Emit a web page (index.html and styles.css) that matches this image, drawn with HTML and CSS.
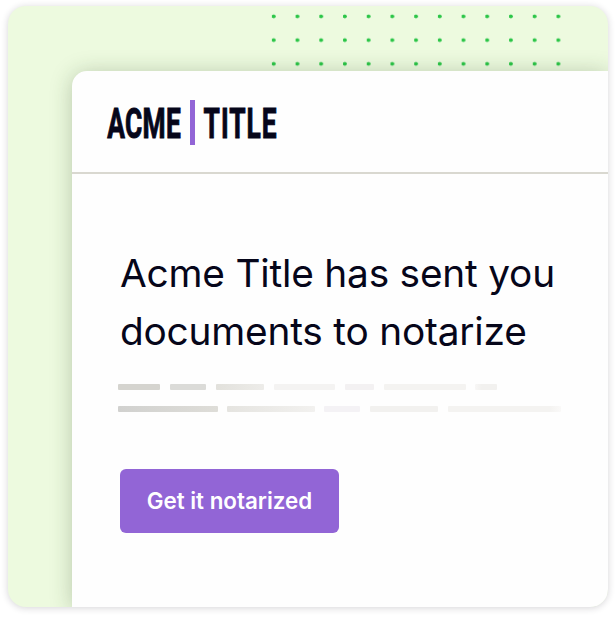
FILE: index.html
```html
<!DOCTYPE html>
<html lang="en">
<head>
<meta charset="utf-8">
<title>Acme Title</title>
<link rel="stylesheet" href="styles.css">
</head>
<body>
<main class="frame">
  <div class="dots"></div>
  <section class="card">
    <header class="header">
      <div class="logo">
        <svg width="74" height="45" viewBox="0 0 74 45"><text class="logo-text" transform="translate(.2 37.7) scale(.61 1)">ACME</text></svg>
        <span class="logo-bar"></span>
        <svg width="75" height="45" viewBox="0 0 75 45"><text class="logo-text wide" transform="translate(.6 38.1) scale(.61 1)">TITLE</text></svg>
      </div>
    </header>
    <div class="content">
      <h1 class="heading">Acme Title has sent you<br>documents to notarize</h1>
      <div class="lines">
        <div class="row"><i class="a1"></i><i class="a2"></i><i class="a3"></i><i class="a4"></i><i class="a5"></i><i class="a6"></i><i class="a7"></i></div>
        <div class="row"><i class="b1"></i><i class="b2"></i><i class="b3"></i><i class="b4"></i><i class="b5"></i></div>
      </div>
      <button class="button">Get it notarized</button>
    </div>
  </section>
</main>
</body>
</html>
```
FILE: styles.css
```css
* { box-sizing: border-box; }
body { margin: 0; background: #fff; height: 617px; overflow: hidden; padding: 6px 8px 10px; font-family: Inter, sans-serif; color: #06061a; }
.frame { width: 600px; height: 601px; border-radius: 18px; background: #edfadf; overflow: hidden; padding-left: 64px; box-shadow: 0 1px 7px rgba(30, 25, 40, .19); }
.dots { height: 65px; margin-left: 190px; width: 310px; background: radial-gradient(circle at 11.7px 10.4px, #2bc547 1.6px, rgba(43, 197, 71, 0) 2.2px) 0 0 / 23.72px 23.72px; }
.card { height: 536px; background: #fefefe; border-top-left-radius: 15px; box-shadow: 0 2px 22px rgba(40, 65, 35, .27); }
.header { height: 103px; padding: 29px 0 0 35px; border-bottom: 2px solid #d9d8d0; }
.logo { display: flex; }
.logo svg { overflow: visible; }
.logo-text { font: 700 43.2px Roboto, sans-serif; fill: #06061a; stroke: #06061a; stroke-width: 1px; letter-spacing: .5px; }
.logo-text.wide { letter-spacing: 1.6px; }
.logo-bar { width: 5px; height: 45px; margin: 0 8px 0 9px; background: #9265d6; }
.content { padding: 70px 0 0 48px; }
.heading { margin: 0; font-size: 38.8px; line-height: 58px; letter-spacing: -.2px; font-weight: 400; white-space: nowrap; }
.lines { margin: 24px 0 0 -2px; }
.row { display: flex; height: 6px; margin-bottom: 16px; }
.row i { height: 6px; border-radius: 1px; }
.a1 { width: 42px; margin-right: 10px; background: #d5d4cf; }
.a2 { width: 36px; margin-right: 10px; background: #dbdbd8; }
.a3 { width: 48px; margin-right: 10px; background: linear-gradient(90deg, #e2e1dc, #edece9); }
.a4 { width: 61px; margin-right: 10px; background: #f4f3f2; }
.a5 { width: 29px; margin-right: 10px; background: #f3f1f2; }
.a6 { width: 82px; margin-right: 9px; background: #f4f3f1; }
.a7 { width: 22px; background: linear-gradient(90deg, #f8f7f6, #f2f1ef 30%); }
.b1 { width: 100px; margin-right: 9px; background: linear-gradient(90deg, #d1d1cf, #deddd8); }
.b2 { width: 88px; margin-right: 9px; background: linear-gradient(90deg, #e5e4e0, #f2f1ef); }
.b3 { width: 36px; margin-right: 10px; background: #f4f2f5; }
.b4 { width: 68px; margin-right: 10px; background: #f2f1ef; }
.b5 { width: 113px; background: linear-gradient(90deg, #f4f3f1 90%, #faf9f8); }
.button { display: block; width: 219px; height: 64px; margin-top: 57px; padding: 0 0 2px; border: 0; border-radius: 6px; background: #9265d6; color: #fff; font: 600 22.4px Inter, sans-serif; white-space: nowrap; }
```
